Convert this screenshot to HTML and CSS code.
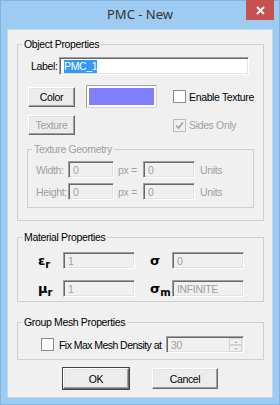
FILE: index.html
```html
<!DOCTYPE html>
<html lang="en">
<head>
  <meta charset="UTF-8">
  <title>PMC - New</title>
  <link rel="stylesheet" href="styles.css">
</head>
<body>
  <div class="window">
    <div class="titlebar">
      <span></span>
      <span class="title">PMC - New</span>
      <span class="close">
        <svg width="9" height="9" viewBox="0 0 9 9"><path d="M1 1L8 8M8 1L1 8" stroke="#fff" stroke-width="1.8"/></svg>
      </span>
    </div>

    <div class="client">
      <fieldset class="group group-object">
        <legend>Object Properties</legend>
        <div class="group-body object-body">
          <div class="label-row">
            <span class="label-text">Label:</span>
            <div class="edit edit-label"><span class="selected">PMC_1</span></div>
          </div>

          <div class="color-grid">
            <button class="btn">Color</button>
            <span></span>
            <div class="swatch"></div>
            <span></span>
            <div class="check-line"><span class="check"></span>Enable Texture</div>

            <button class="btn" disabled>Texture</button>
            <span></span>
            <span></span>
            <span></span>
            <div class="check-line off">
              <span class="check checked">
                <svg width="9" height="9" viewBox="0 0 9 9"><path d="M1 4.5L3.5 7L8 1.5" fill="none" stroke="#a0a0a0" stroke-width="1.6"/></svg>
              </span>Sides Only
            </div>
          </div>

          <fieldset class="group group-geometry off">
            <legend>Texture Geometry</legend>
            <div class="group-body geometry-body">
              <span>Width:</span>
              <div class="edit off edit-px">0</div>
              <span class="eq">px =</span>
              <div class="edit off edit-units">0</div>
              <span class="units">Units</span>

              <span>Height:</span>
              <div class="edit off edit-px">0</div>
              <span class="eq">px =</span>
              <div class="edit off edit-units">0</div>
              <span class="units">Units</span>
            </div>
          </fieldset>
        </div>
      </fieldset>

      <fieldset class="group group-material">
        <legend>Material Properties</legend>
        <div class="group-body material-body">
          <span class="sym">&epsilon;<sub>r</sub></span>
          <div class="edit off">1</div>
          <span class="sym sym-right">&sigma;</span>
          <div class="edit off">0</div>

          <span class="sym">&mu;<sub>r</sub></span>
          <div class="edit off">1</div>
          <span class="sym sym-right">&sigma;<sub>m</sub></span>
          <div class="edit off">INFINITE</div>
        </div>
      </fieldset>

      <fieldset class="group group-mesh">
        <legend>Group Mesh Properties</legend>
        <div class="group-body mesh-body">
          <span class="check"></span>
          <span class="mesh-text">Fix Max Mesh Density at</span>
          <div class="edit off spin-edit">
            <span>30</span>
            <span class="spin">
              <span class="spin-btn"><i class="arrow-up"></i></span>
              <span class="spin-btn"><i class="arrow-down"></i></span>
            </span>
          </div>
        </div>
      </fieldset>

      <div class="dialog-buttons">
        <button class="btn btn-dialog btn-default">OK</button>
        <button class="btn btn-dialog">Cancel</button>
      </div>
    </div>
  </div>
</body>
</html>
```

FILE: styles.css
```css
* {
  box-sizing: border-box;
}

body {
  margin: 0;
  font-family: "Liberation Sans", Arial, sans-serif;
  font-size: 10.5px;
  letter-spacing: -0.35px;
  white-space: nowrap;
  color: #000;
}

.window {
  width: 280px;
  height: 405px;
  background: #9dcbf2;
  border: 1px solid #82b2df;
  padding: 0 6px 6px 6px;
  display: flex;
  flex-direction: column;
}

/* title bar */
.titlebar {
  height: 28px;
  display: grid;
  grid-template-columns: 1fr auto 1fr;
  align-items: start;
}

.title {
  font-family: "Noto Sans", sans-serif;
  font-size: 13px;
  letter-spacing: 0;
  line-height: 26px;
  color: #333;
}

.close {
  justify-self: end;
  width: 28px;
  height: 20px;
  margin: -1px -1px 0 0;
  background: #c75050;
  display: flex;
  align-items: center;
  justify-content: center;
}

/* dialog area */
.client {
  flex: 1;
  background: #f0f0f0;
  border: 1px solid #c3d9ee;
  padding: 8px 8px 0 9px;
}

.group {
  margin: 0;
  padding: 0;
  border: 1px solid #cfcfcf;
  min-width: 0;
}

.group legend {
  margin-left: 4px;
  padding: 0 2px;
  line-height: 13px;
}

.group.off legend {
  color: #a0a0a0;
}

.object-body {
  padding: 6px 0 12px 9px;
}

.label-row {
  display: flex;
  align-items: center;
  padding-left: 4px;
  height: 18px;
}

.label-text {
  width: 28px;
}

/* edit boxes */
.edit {
  height: 17px;
  background: #fff;
  border: 1px solid;
  border-color: #a0a0a0 #fff #fff #a0a0a0;
  box-shadow: inset 1px 1px #696969, inset -1px -1px #e3e3e3;
  padding: 2px 3px 0 4px;
  line-height: 12px;
  overflow: hidden;
}

.edit.off {
  background: #f0f0f0;
  color: #a0a0a0;
}

.edit-label {
  width: 190px;
  height: 18px;
  padding-top: 2px;
}

.selected {
  background: #3399ff;
  color: #fff;
  display: inline-block;
  line-height: 13px;
}

.color-grid {
  display: grid;
  grid-template-columns: 47px 11px 71px 16px 1fr;
  grid-template-rows: 23px 20px;
  row-gap: 7px;
  align-items: center;
  margin: 10px 0 0 1px;
}

/* buttons */
.btn {
  font: inherit;
  letter-spacing: inherit;
  height: 20px;
  padding: 0;
  background: #ececec;
  border: 1px solid;
  border-color: #fff #696969 #696969 #fff;
  box-shadow: inset -1px -1px #a0a0a0, inset 1px 1px #e3e3e3;
  color: #000;
}

.btn:disabled {
  color: #a0a0a0;
}

.swatch {
  height: 23px;
  border: 1px solid #a0a0a0;
  border-right-color: #d6d6d6;
  border-bottom-color: #d6d6d6;
  padding: 2px;
  background: #fff;
}

.swatch::after {
  content: "";
  display: block;
  height: 100%;
  background: #8080ff;
}

/* check boxes */
.check-line {
  display: flex;
  align-items: center;
  gap: 3px;
}

.check-line.off {
  color: #a0a0a0;
}

.check {
  width: 13px;
  height: 13px;
  border: 1px solid #8a8a8a;
  background: #fff;
  display: flex;
  align-items: center;
  justify-content: center;
}

.check.checked {
  border-color: #bcbcbc;
  background: #f0f0f0;
}

/* texture geometry */
.group-geometry {
  margin: 8px 0 0 0;
  width: 227px;
}

.geometry-body {
  display: grid;
  grid-template-columns: 32px 46px 29px 52px auto;
  row-gap: 5px;
  align-items: center;
  padding: 5px 0 7px 8px;
  color: #a0a0a0;
}

.eq {
  padding-left: 4px;
}

.units {
  padding-left: 5px;
}

/* material */
.group-material {
  margin-top: 10px;
}

.material-body {
  display: grid;
  grid-template-columns: 25px 72px 37px 72px;
  row-gap: 11px;
  align-items: center;
  padding: 8px 0 4px 20px;
}

.sym {
  font-family: "DejaVu Sans", sans-serif;
  font-weight: bold;
  font-size: 13px;
  letter-spacing: 0;
  line-height: 17px;
}

.sym sub {
  font-size: 10px;
  vertical-align: -3px;
  line-height: 0;
}

.sym-right {
  padding-left: 15px;
}

/* mesh */
.group-mesh {
  margin-top: 14px;
}

.mesh-body {
  display: grid;
  grid-template-columns: 13px 112px 78px;
  align-items: center;
  padding: 7px 0 6px 23px;
}

.mesh-text {
  padding-left: 5px;
  letter-spacing: -0.55px;
}

.spin-edit {
  display: flex;
  justify-content: space-between;
  padding-right: 1px;
}

.spin {
  width: 13px;
  display: flex;
  flex-direction: column;
  margin-top: -1px;
}

.spin-btn {
  height: 7px;
  border: 1px solid #d4d4d4;
  display: flex;
  align-items: center;
  justify-content: center;
}

.arrow-up {
  border-left: 2px solid transparent;
  border-right: 2px solid transparent;
  border-bottom: 2px solid #b8b8b8;
}

.arrow-down {
  border-left: 2px solid transparent;
  border-right: 2px solid transparent;
  border-top: 2px solid #b8b8b8;
}

/* OK / Cancel */
.dialog-buttons {
  display: flex;
  justify-content: center;
  gap: 23px;
  margin-top: 8px;
}

.btn-dialog {
  width: 66px;
  height: 21px;
}

.btn-default {
  outline: 1px solid #444;
  outline-offset: 0;
}
```
